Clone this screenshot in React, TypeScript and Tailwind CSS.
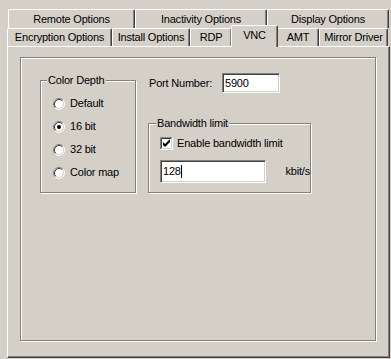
const FONT = { fontFamily: '"Liberation Sans", Arial, sans-serif' };

const ROW1 = [
  { label: "Remote Options", w: "w-[127px]" },
  { label: "Inactivity Options", w: "w-[132px]" },
  { label: "Display Options", w: "w-[122px]" },
];

const ROW2 = [
  { label: "Encryption Options", w: "w-[105px]" },
  { label: "Install Options", w: "w-[78px]" },
  { label: "RDP", w: "w-[42px]" },
  { label: "VNC", w: "w-[47px]", sel: true },
  { label: "AMT", w: "w-[42px]" },
  { label: "Mirror Driver", w: "w-[69px]" },
];

const RADIOS = ["Default", "16 bit", "32 bit", "Color map"];

function Tab({ label, w, sel }: { label: string; w: string; sel?: boolean }) {
  if (sel) {
    return (
      <div className={`${w} relative z-10 -mx-[1px] -mt-[3px] h-[22px] flex items-start justify-center pt-[3px] bg-[#d4d0c8] border-l border-t border-r border-white border-r-[#404040] rounded-t-[2px] shadow-[inset_-1px_0_0_#808080]`}>
        {label}
      </div>
    );
  }
  return (
    <div className={`${w} h-full flex items-center justify-center border-l border-t border-r border-white border-r-[#404040] rounded-t-[2px] shadow-[inset_-1px_0_0_#808080]`}>
      {label}
    </div>
  );
}

function Radio({ checked }: { checked?: boolean }) {
  return (
    <svg width="12" height="12" viewBox="0 0 12 12" className="shrink-0">
      <circle cx="6" cy="6" r="5" fill="#fff" />
      <path d="M2.11 9.89 A5.5 5.5 0 0 1 9.89 2.11" fill="none" stroke="#808080" />
      <path d="M9.89 2.11 A5.5 5.5 0 0 1 2.11 9.89" fill="none" stroke="#fff" />
      <path d="M2.82 9.18 A4.5 4.5 0 0 1 9.18 2.82" fill="none" stroke="#404040" />
      <path d="M9.18 2.82 A4.5 4.5 0 0 1 2.82 9.18" fill="none" stroke="#d4d0c8" />
      {checked && <circle cx="6" cy="6" r="2" fill="#000" />}
    </svg>
  );
}

function Check() {
  return (
    <svg width="13" height="13" viewBox="0 0 13 13" className="shrink-0">
      <rect x="0" y="0" width="13" height="13" fill="#fff" />
      <path d="M0.5 12.5 V0.5 H12.5" fill="none" stroke="#808080" />
      <path d="M1.5 11.5 V1.5 H11.5" fill="none" stroke="#404040" />
      <path d="M0.5 12.5 H12.5 V0.5" fill="none" stroke="#fff" />
      <path d="M1.5 11.5 H11.5 V1.5" fill="none" stroke="#d4d0c8" />
      <path d="M3 5 L3 8 L5 10 L10 5 L10 2 L5 7 Z" fill="#000" />
    </svg>
  );
}

function Field({ value, w, h, caret }: { value: string; w: string; h: string; caret?: boolean }) {
  return (
    <div className={`${w} ${h} flex items-center pl-[2px] bg-white border border-[#808080] border-b-white border-r-white shadow-[inset_1px_1px_0_#404040,inset_-1px_-1px_0_#d4d0c8]`}>
      {value}
      {caret && <span className="inline-block w-[1px] h-[13px] bg-black" />}
    </div>
  );
}

export default function App() {
  return (
    <div style={FONT} className="w-[391px] h-[359px] overflow-hidden bg-[#d4d0c8] pt-[9px] pl-[7px] text-[11px] leading-[13px] tracking-[-0.2px] text-black">
      <div className="flex h-[19px] ml-[1px]">
        {ROW1.map((t) => (
          <Tab key={t.label} {...t} />
        ))}
      </div>
      <div className="flex items-start h-[18px]">
        {ROW2.map((t) => (
          <Tab key={t.label} {...t} />
        ))}
      </div>

      <div className="w-[383px] h-[312px] pt-[10px] pl-[12px] border border-white border-r-[#404040] border-b-[#404040] shadow-[inset_-1px_-1px_0_#808080]">
        <div className="w-[356px] h-[284px] border border-[#808080] shadow-[inset_1px_1px_0_#fff,1px_1px_0_#fff] flex items-start pl-[19px]">
          {/* Color depth */}
          <div className="relative mt-[22px] w-[96px] h-[113px] border border-[#808080] shadow-[inset_1px_1px_0_#fff,1px_1px_0_#fff] pt-[11px] pl-[12px]">
            <div className="absolute left-[6px] -top-[7px] px-[1px] bg-[#d4d0c8]">Color Depth</div>
            {RADIOS.map((r, i) => (
              <div key={r} className="flex items-center gap-[5px] h-[23px]">
                <Radio checked={i === 1} />
                <span>{r}</span>
              </div>
            ))}
          </div>

          <div className="ml-[12px] mt-[15px]">
            <div className="flex items-center h-[20px] pl-[1px]">
              <span className="w-[73px]">Port Number:</span>
              <Field value="5900" w="w-[58px]" h="h-[20px]" />
            </div>

            {/* Bandwidth */}
            <div className="relative mt-[30px] w-[163px] h-[70px] border border-[#808080] shadow-[inset_1px_1px_0_#fff,1px_1px_0_#fff] pt-[13px] pl-[11px]">
              <div className="absolute left-[7px] -top-[7px] px-[1px] bg-[#d4d0c8]">Bandwidth limit</div>
              <div className="flex items-center gap-[4px] h-[13px]">
                <Check />
                <span>Enable bandwidth limit</span>
              </div>
              <div className="flex items-center mt-[10px]">
                <Field value="128" w="w-[107px]" h="h-[23px]" caret />
                <span className="ml-[20px]">kbit/s</span>
              </div>
            </div>
          </div>
        </div>
      </div>
    </div>
  );
}
